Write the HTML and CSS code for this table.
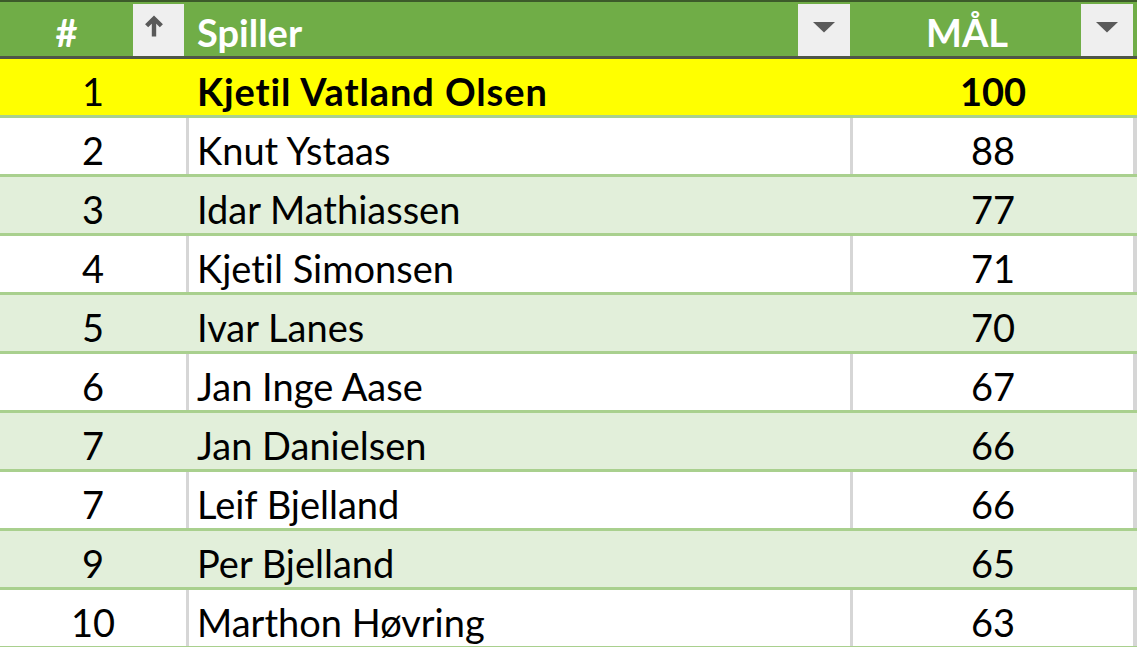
FILE: index.html
```html
<!DOCTYPE html>
<html lang="no">
<head>
<meta charset="utf-8">
<title>Toppscorere</title>
<link rel="stylesheet" href="styles.css">
</head>
<body>
<div class="table">
  <div class="head">
    <div class="hcell c1">
      <span class="htext center">#</span>
      <span class="btn btn-sort">
        <svg class="ico-sort" viewBox="0 0 18 20"><path d="M9 3.5 V19.5 M2.3 9.8 L9 3.2 L15.7 9.8" fill="none" stroke="#595959" stroke-width="4"/></svg>
      </span>
    </div>
    <div class="hcell c2">
      <span class="htext">Spiller</span>
      <span class="btn btn-drop"><svg class="ico-drop" width="24" height="12" viewBox="0 0 24 12"><path d="M1 1 L23 1 L12 11.5 Z" fill="#5a5a5a"/></svg></span>
    </div>
    <div class="hcell c3">
      <span class="htext center">MÅL</span>
      <span class="btn btn-drop"><svg class="ico-drop" width="24" height="12" viewBox="0 0 24 12"><path d="M1 1 L23 1 L12 11.5 Z" fill="#5a5a5a"/></svg></span>
    </div>
  </div>
  <div class="row top"><div class="cell num">1</div><div class="cell name">Kjetil Vatland Olsen</div><div class="cell goals">100</div></div>
  <div class="row white"><div class="cell num">2</div><div class="cell name">Knut Ystaas</div><div class="cell goals">88</div></div>
  <div class="row green"><div class="cell num">3</div><div class="cell name">Idar Mathiassen</div><div class="cell goals">77</div></div>
  <div class="row white"><div class="cell num">4</div><div class="cell name">Kjetil Simonsen</div><div class="cell goals">71</div></div>
  <div class="row green"><div class="cell num">5</div><div class="cell name">Ivar Lanes</div><div class="cell goals">70</div></div>
  <div class="row white"><div class="cell num">6</div><div class="cell name">Jan Inge Aase</div><div class="cell goals">67</div></div>
  <div class="row green"><div class="cell num">7</div><div class="cell name">Jan Danielsen</div><div class="cell goals">66</div></div>
  <div class="row white"><div class="cell num">7</div><div class="cell name">Leif Bjelland</div><div class="cell goals">66</div></div>
  <div class="row green"><div class="cell num">9</div><div class="cell name">Per Bjelland</div><div class="cell goals">65</div></div>
  <div class="row white"><div class="cell num">10</div><div class="cell name">Marthon Høvring</div><div class="cell goals">63</div></div>
</div>
</body>
</html>
```

FILE: styles.css
```css
html, body {
  margin: 0;
  padding: 0;
  background: #ffffff;
  overflow: hidden;
}
.table {
  width: 1137px;
  font-family: Lato, "Liberation Sans", sans-serif;
  font-size: 38px;
  font-variant-ligatures: none;
  color: #000;
}
.head {
  display: grid;
  grid-template-columns: 189px 664px 284px;
  height: 54px;
  background: #70ad47;
  border-top: 2px solid #3c5a2a;
  border-bottom: 3px solid #4e5648;
}
.hcell {
  display: flex;
  align-items: stretch;
}
.htext {
  flex: 1;
  display: flex;
  align-items: center;
  padding-top: 6px;
  color: #ffffff;
  font-weight: 700;
}
.htext.center {
  justify-content: center;
}
.c2 .htext {
  padding-left: 8px;
}
.btn {
  display: flex;
  align-items: center;
  justify-content: center;
  background: #efefef;
  margin-top: 2px;
  width: 52px;
  flex: none;
}
.btn svg {
  flex: none;
  display: block;
}
.c1 .btn {
  width: 51px;
  margin-right: 5px;
}
.ico-sort {
  width: 20px;
  height: 22px;
  margin-left: -10px;
  margin-top: -8px;
}
.ico-drop {
  margin-top: -6px;
}
.c2 .btn {
  margin-right: 3px;
}
.c3 .btn {
  margin-right: 4px;
}
.row {
  display: grid;
  grid-template-columns: 189px 664px 284px;
  height: 56px;
  border-bottom: 3px solid #a9d08e;
}
.row.top {
  background: #ffff00;
}
.row.top .name,
.row.top .goals {
  font-weight: 700;
}
.row.top .name {
  letter-spacing: 0.9px;
}
.row.white {
  background: #ffffff;
}
.row.green {
  background: #e2efda;
}
.cell {
  display: flex;
  align-items: center;
  padding-top: 8px;
  border-right: 3px solid transparent;
  white-space: nowrap;
}
.cell.goals {
  border-right-width: 4px;
}
.row.white .cell {
  border-right-color: #d6d6d6;
}
.num {
  justify-content: center;
}
.name {
  padding-left: 8px;
}
.goals {
  justify-content: center;
}
```
